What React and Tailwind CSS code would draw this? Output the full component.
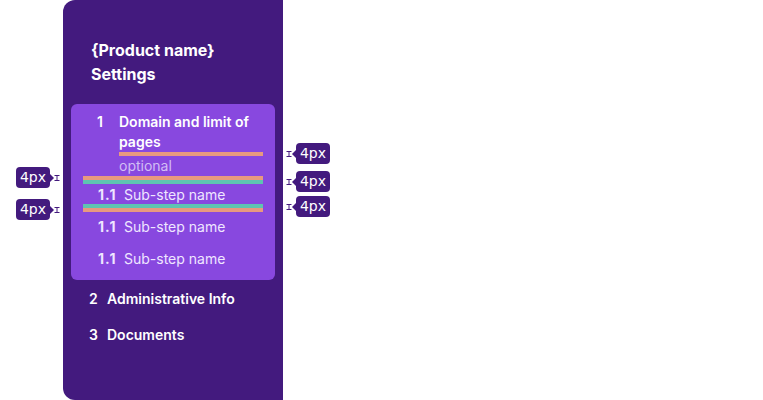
import React from "react";

const DARK = "bg-[#431a7e]";

function IBeam() {
  return (
    <svg width="6" height="6" viewBox="0 0 6 6" className="block">
      <path d="M0.5 0.5H5.5M3 0.5V5.5M0.5 5.5H5.5" stroke="#431a7e" strokeWidth="1" fill="none" />
    </svg>
  );
}

// measurement tag, side tells which way the pointer goes
function Tag({ side, className }) {
  const box = (
    <div className={`${DARK} text-white rounded-[4px] h-[21px] w-[34px] flex items-center justify-center text-[14px] font-['DejaVu_Sans',sans-serif]`}>
      4px
    </div>
  );
  if (side === "right") {
    return (
      <div className={`absolute flex items-center ${className}`}>
        {box}
        <div className="w-0 h-0 border-y-[4px] border-y-transparent border-l-[4px] border-l-[#431a7e]" />
        <IBeam />
      </div>
    );
  }
  return (
    <div className={`absolute flex items-center ${className}`}>
      <IBeam />
      <div className="w-0 h-0 border-y-[4px] border-y-transparent border-r-[4px] border-r-[#431a7e]" />
      {box}
    </div>
  );
}

function SubStep() {
  return (
    <div className="flex h-5 items-center pl-[27px] text-[14px] text-[#efe6ff]">
      <span className="font-bold w-[26px] tracking-[1px]">1.1</span>
      <span>Sub-step name</span>
    </div>
  );
}

export default function App() {
  const steps = [
    { n: "2", label: "Administrative Info" },
    { n: "3", label: "Documents" },
  ];

  return (
    <div className="relative w-[763px] h-[400px] bg-white font-['Inter',sans-serif]">
      <div className="flex h-full pl-[63px]">
        <aside className={`w-[220px] h-full ${DARK} rounded-l-xl text-white pt-[38px]`}>
          <div className="pl-[28px] text-[16px] font-bold leading-6">
            <div>{"{Product name}"}</div>
            <div>Settings</div>
          </div>

          <div className="mx-2 mt-[18px] rounded-md bg-[#8848df] pt-2 pb-3">
            <div className="flex pl-[26px] text-[14px] font-semibold leading-5">
              <span className="w-[22px]">1</span>
              <span className="w-[140px]">Domain and limit of pages</span>
            </div>
            <div className="ml-[48px] mr-3 h-1 bg-[#e8997f]" />
            <div className="h-5 pl-[48px] text-[14px] leading-5 text-[#d2bdf4]">optional</div>
            <div className="mx-3 h-1 bg-[#e8997f]" />
            <div className="mx-3 h-1 bg-[#5ec4b1]" />
            <SubStep />
            <div className="mx-3 h-1 bg-[#5ec4b1]" />
            <div className="mx-3 h-1 bg-[#e8997f]" />
            <div className="mt-1 flex flex-col gap-3">
              <SubStep />
              <SubStep />
            </div>
          </div>

          <div className="mt-2 flex flex-col gap-4">
            {steps.map((s) => (
              <div key={s.n} className="flex h-5 items-center pl-[26px] text-[14px] font-semibold">
                <span className="w-[18px]">{s.n}</span>
                <span>{s.label}</span>
              </div>
            ))}
          </div>
        </aside>
      </div>

      <Tag side="right" className="left-[16px] top-[167px]" />
      <Tag side="right" className="left-[16px] top-[199px]" />
      <Tag side="left" className="left-[286px] top-[143px]" />
      <Tag side="left" className="left-[286px] top-[171px]" />
      <Tag side="left" className="left-[286px] top-[196px]" />
    </div>
  );
}
